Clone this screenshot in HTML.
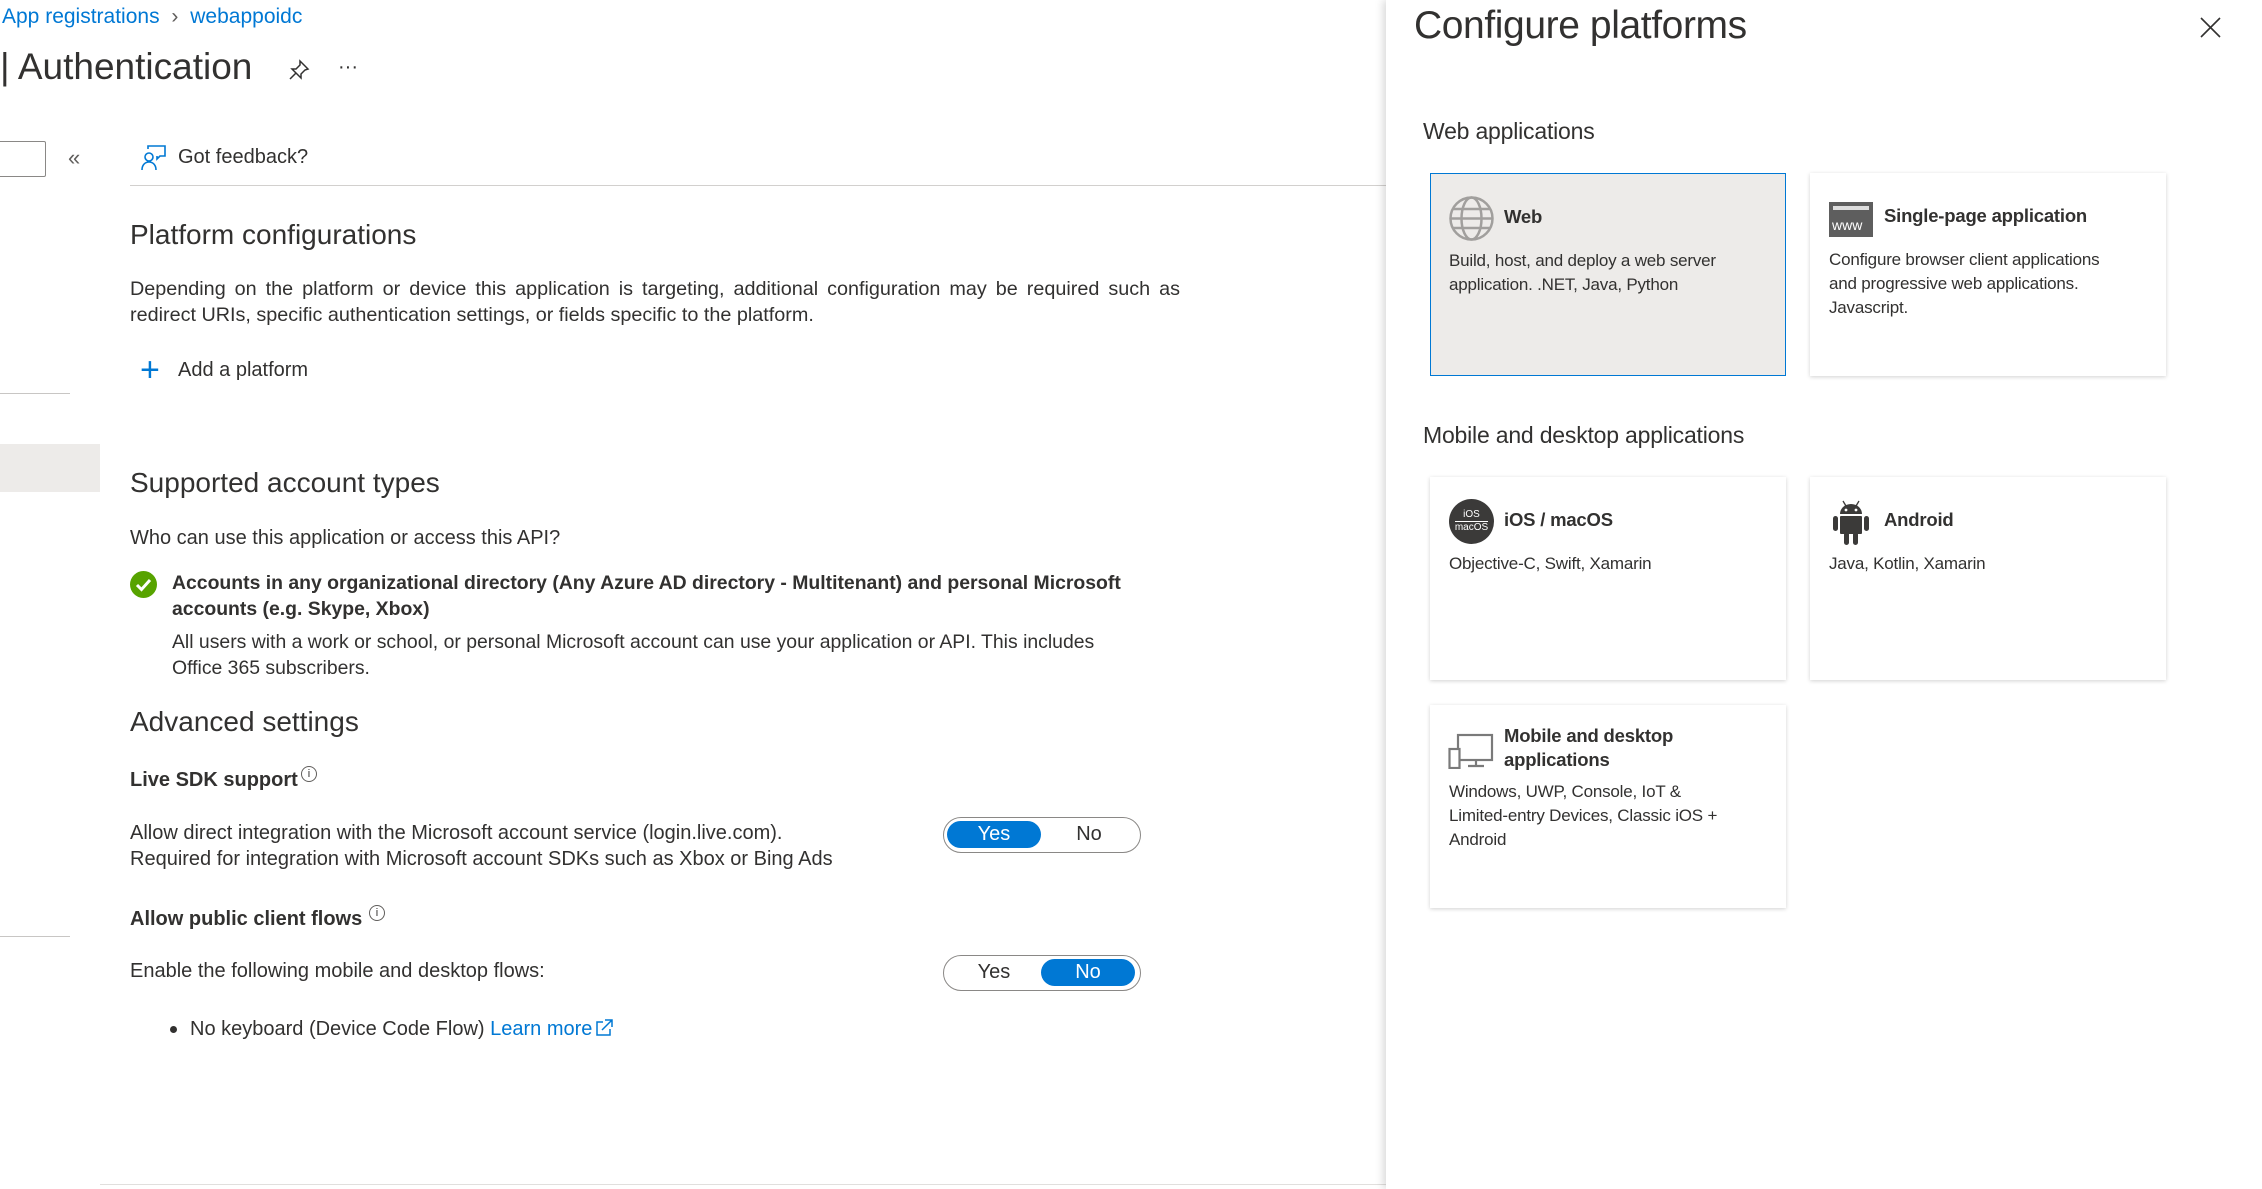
<!DOCTYPE html>
<html><head><meta charset="utf-8">
<style>
*{margin:0;padding:0;box-sizing:border-box}
body{width:2262px;height:1189px;overflow:hidden;background:#fff;font-family:"Liberation Sans",sans-serif;color:#323130;position:relative}
.a{position:absolute;white-space:nowrap}
.blue{color:#0078d4}
.p{font-size:20px;line-height:26px}
.h2{font-size:28px}
.tog{position:absolute;width:198px;height:36px;border:1.5px solid #8a8886;border-radius:18px}
.tog span{position:absolute;top:3px;width:94px;height:27px;border-radius:14px;text-align:center;line-height:27px;font-size:20px}
.on{background:#0078d4;color:#fff}
.card{position:absolute;width:356px;height:203px;background:#fff;box-shadow:0 1px 4px rgba(0,0,0,.18)}
.ct{position:absolute;left:74px;top:31px;font-weight:bold;font-size:18.5px;line-height:24px;color:#323130;letter-spacing:-.2px}
.cd{position:absolute;left:19px;top:75px;font-size:17px;line-height:24px;color:#323130;letter-spacing:-.2px}
</style></head><body>
<div class="a blue" style="left:2px;top:5px;font-size:21px">App registrations <span style="color:#605e5c;margin:0 6px">&#8250;</span> webappoidc</div>
<div class="a" style="left:0;top:46px;font-size:37px">| Authentication</div>
<svg class="a" style="left:288px;top:59px" width="22" height="22" viewBox="0 0 22 22"><path d="M12 2l8 8-3 1-4 4 0 4-9-9 4 0 4-4z M8 14l-6 6" fill="none" stroke="#323130" stroke-width="1.5"/></svg>
<div class="a" style="left:338px;top:56px;font-size:20px">···</div>
<div class="a" style="left:-2px;top:141px;width:48px;height:36px;border:1px solid #8a8886;border-radius:2px"></div>
<div class="a" style="left:68px;top:145px;font-size:22px;color:#605e5c">«</div>
<svg class="a" style="left:140px;top:145px" width="28" height="26" viewBox="0 0 28 26"><circle cx="9" cy="12" r="4" fill="none" stroke="#0078d4" stroke-width="1.6"/><path d="M2 25c0-5 3-8 7-8s7 3 7 8M8 4V1h17v10h-5l-3 3v-3" fill="none" stroke="#0078d4" stroke-width="1.6"/></svg>
<div class="a" style="left:178px;top:146px;font-size:20px">Got feedback?</div>
<div class="a" style="left:130px;top:185px;width:1256px;height:1px;background:#d2d0ce"></div>
<div class="a h2" style="left:130px;top:219px">Platform configurations</div>
<div class="a p" style="left:130px;top:276px;width:1050px;white-space:normal;text-align:justify;text-align-last:left;font-size:19.8px">Depending on the platform or device this application is targeting, additional configuration may be required such as redirect URIs, specific authentication settings, or fields specific to the platform.</div>
<div class="a" style="left:140px;top:355px;font-size:34px;color:#0078d4;font-weight:300;line-height:30px">+</div>
<div class="a p" style="left:178px;top:357px">Add a platform</div>
<div class="a" style="left:0;top:393px;width:70px;height:1px;background:#c8c6c4"></div>
<div class="a" style="left:0;top:444px;width:100px;height:48px;background:#edebe9"></div>
<div class="a h2" style="left:130px;top:467px">Supported account types</div>
<div class="a p" style="left:130px;top:525px">Who can use this application or access this API?</div>
<svg class="a" style="left:130px;top:571px" width="27" height="27" viewBox="0 0 27 27"><circle cx="13.5" cy="13.5" r="13.5" fill="#57a300"/><path d="M7 14l4.5 4.5L20 9" fill="none" stroke="#fff" stroke-width="3"/></svg>
<div class="a p" style="left:172px;top:570px;font-weight:bold;font-size:19.4px">Accounts in any organizational directory (Any Azure AD directory - Multitenant) and personal Microsoft<br>accounts (e.g. Skype, Xbox)</div>
<div class="a p" style="left:172px;top:629px;font-size:19.4px">All users with a work or school, or personal Microsoft account can use your application or API. This includes<br>Office 365 subscribers.</div>
<div class="a h2" style="left:130px;top:706px">Advanced settings</div>
<div class="a p" style="left:130px;top:767px;font-weight:bold">Live SDK support</div>
<div class="a" style="left:301px;top:766px;width:16px;height:16px;border:1px solid #605e5c;border-radius:50%;font-size:11px;text-align:center;line-height:14px">i</div>
<div class="a p" style="left:130px;top:820px">Allow direct integration with the Microsoft account service (login.live.com).<br>Required for integration with Microsoft account SDKs such as Xbox or Bing Ads</div>
<div class="tog" style="left:943px;top:817px"><span class="on" style="left:3px">Yes</span><span style="left:98px">No</span></div>
<div class="a p" style="left:130px;top:906px;font-weight:bold">Allow public client flows</div>
<div class="a" style="left:369px;top:905px;width:16px;height:16px;border:1px solid #605e5c;border-radius:50%;font-size:11px;text-align:center;line-height:14px">i</div>
<div class="a" style="left:0;top:936px;width:70px;height:1px;background:#c8c6c4"></div>
<div class="a p" style="left:130px;top:958px">Enable the following mobile and desktop flows:</div>
<div class="tog" style="left:943px;top:955px"><span style="left:3px">Yes</span><span class="on" style="left:97px">No</span></div>
<div class="a" style="left:170px;top:1026px;width:7px;height:7px;border-radius:50%;background:#323130"></div>
<div class="a p" style="left:190px;top:1016px">No keyboard (Device Code Flow) <span class="blue">Learn more</span><svg style="vertical-align:-3px;margin-left:2px" width="20" height="20" viewBox="0 0 20 20"><path d="M9 4H3v13h13v-6M11 2h7v7M18 2L8 12" fill="none" stroke="#0078d4" stroke-width="1.5"/></svg></div>
<div class="a" style="left:100px;top:1184px;width:1286px;height:1px;background:#e1dfdd"></div>

<!-- panel -->
<div class="a" style="left:1386px;top:0;width:876px;height:1189px;background:#fff;box-shadow:-3px 0 8px rgba(0,0,0,.15)"></div>
<div class="a" style="left:1414px;top:4px;font-size:39px;letter-spacing:-.4px">Configure platforms</div>
<svg class="a" style="left:2200px;top:17px" width="21" height="21" viewBox="0 0 21 21"><path d="M1 1l19 19M20 1L1 20" stroke="#323130" stroke-width="1.6"/></svg>
<div class="a" style="left:1423px;top:118px;font-size:23px;letter-spacing:-.2px">Web applications</div>
<div class="card" style="left:1430px;top:173px;background:#edebe9;border:1.5px solid #0078d4;box-shadow:none">
<svg class="a" style="left:18px;top:22px" width="45" height="45" viewBox="0 0 45 45"><g fill="none" stroke="#a19f9d" stroke-width="2.5"><circle cx="22.5" cy="22.5" r="21"/><ellipse cx="22.5" cy="22.5" rx="10" ry="21"/><path d="M1.5 22.5h42M4 13h37M4 32h37"/></g></svg>
<div class="ct" style="left:73px">Web</div>
<div class="cd" style="left:18px">Build, host, and deploy a web server<br>application. .NET, Java, Python</div></div>
<div class="card" style="left:1810px;top:173px">
<div class="a" style="left:19px;top:29px;width:44px;height:35px;background:#5e5e5e"></div>
<div class="a" style="left:23px;top:33px;width:36px;height:4px;background:#ddd"></div>
<div class="a" style="left:22px;top:44px;font-size:14px;color:#fff">www</div>
<div class="ct">Single-page application</div>
<div class="cd">Configure browser client applications<br>and progressive web applications.<br>Javascript.</div></div>
<div class="a" style="left:1423px;top:422px;font-size:23px;letter-spacing:-.2px">Mobile and desktop applications</div>
<div class="card" style="left:1430px;top:477px">
<div class="a" style="left:19px;top:22px;width:45px;height:45px;border-radius:50%;background:#3b3a39;color:#fff;font-size:10px;text-align:center;padding-top:9px;line-height:13px">iOS<br><span style="border-top:1px solid #fff">macOS</span></div>
<div class="ct">iOS / macOS</div>
<div class="cd">Objective-C, Swift, Xamarin</div></div>
<div class="card" style="left:1810px;top:477px">
<svg class="a" style="left:22px;top:23px" width="38" height="45" viewBox="0 0 38 45"><g fill="#3b3a39"><path d="M8 14a11 10 0 0122 0z"/><rect x="8" y="16" width="22" height="18" rx="1"/><rect x="1" y="16" width="5" height="15" rx="2.5"/><rect x="32" y="16" width="5" height="15" rx="2.5"/><rect x="12" y="32" width="5" height="13" rx="2.5"/><rect x="21" y="32" width="5" height="13" rx="2.5"/></g><path d="M11 1l3 5M27 1l-3 5" stroke="#3b3a39" stroke-width="1.3"/><circle cx="14" cy="10" r="1.4" fill="#fff"/><circle cx="24" cy="10" r="1.4" fill="#fff"/></svg>
<div class="ct">Android</div>
<div class="cd">Java, Kotlin, Xamarin</div></div>
<div class="card" style="left:1430px;top:705px">
<svg class="a" style="left:18px;top:28px" width="46" height="36" viewBox="0 0 46 36"><g fill="none" stroke="#7a7a7a" stroke-width="2.2"><rect x="10" y="2" width="34" height="25"/><path d="M20 33h16M28 27v6"/><rect x="1.5" y="16" width="10" height="19" fill="#fff"/></g></svg>
<div class="ct" style="top:19px">Mobile and desktop<br>applications</div>
<div class="cd">Windows, UWP, Console, IoT &amp;<br>Limited-entry Devices, Classic iOS +<br>Android</div></div>
</body></html>
